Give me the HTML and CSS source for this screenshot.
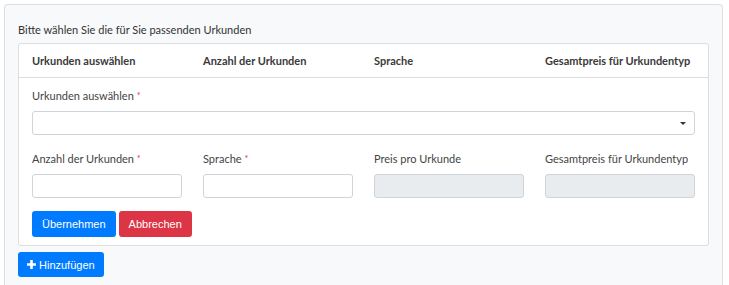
FILE: index.html
```html
<!DOCTYPE html>
<html lang="de">
<head>
    <meta charset="UTF-8">
    <meta name="viewport" content="width=device-width, initial-scale=1.0">
    <title>Urkunden</title>
    <link rel="stylesheet" href="styles.css">
</head>
<body>
    <div class="panel">
        <p class="intro">Bitte wählen Sie die für Sie passenden Urkunden</p>

        <div class="card">
            <div class="card-header">
                <span>Urkunden auswählen</span>
                <span>Anzahl der Urkunden</span>
                <span>Sprache</span>
                <span>Gesamtpreis für Urkundentyp</span>
            </div>
            <div class="card-body">
                <label class="field-label" for="certType">Urkunden auswählen <span class="req">*</span></label>
                <div class="select-box" id="certType">
                    <span class="caret"></span>
                </div>

                <div class="field-row">
                    <div class="field">
                        <label class="field-label" for="count">Anzahl der Urkunden <span class="req">*</span></label>
                        <input type="text" id="count" class="input">
                    </div>
                    <div class="field">
                        <label class="field-label" for="lang">Sprache <span class="req">*</span></label>
                        <input type="text" id="lang" class="input">
                    </div>
                    <div class="field">
                        <label class="field-label" for="unitPrice">Preis pro Urkunde</label>
                        <input type="text" id="unitPrice" class="input" disabled>
                    </div>
                    <div class="field">
                        <label class="field-label" for="totalPrice">Gesamtpreis für Urkundentyp</label>
                        <input type="text" id="totalPrice" class="input" disabled>
                    </div>
                </div>

                <div class="actions">
                    <button class="btn btn-primary">Übernehmen</button>
                    <button class="btn btn-danger">Abbrechen</button>
                </div>
            </div>
        </div>

        <button class="btn btn-primary btn-add">
            <svg width="9" height="9" viewBox="0 0 9 9"><path d="M3.2 0h2.6v3.2H9v2.6H5.8V9H3.2V5.8H0V3.2h3.2z" fill="#fff"/></svg>
            Hinzufügen
        </button>
    </div>
</body>
</html>
```

FILE: styles.css
```css
body {
    margin: 0;
    font-family: Lato, "Open Sans", sans-serif;
    font-size: 11px;
    color: #333;
    background: #fff;
}
.panel {
    margin: 4px 6px 0 4px;
    height: 290px;
    box-sizing: border-box;
    padding: 17px 13px 0;
    background-color: #f8f9fa;
    border: 1px solid #dcdde0;
    border-bottom: none;
    border-radius: 4px 4px 0 0;
}
.intro {
    margin: 0 0 5px;
    line-height: 16px;
    font-size: 11px;
    color: #333;
}
.card {
    background: white;
    border: 1px solid #dcdde0;
    border-radius: 3px;
}
.card-header {
    display: grid;
    grid-template-columns: repeat(4, 1fr);
    gap: 21px;
    height: 33px;
    align-items: center;
    padding: 0 13px;
    border-bottom: 1px solid #dcdde0;
    font-weight: 700;
    color: #3a3a3a;
}
.card-body {
    padding: 10px 13px 8px;
}
.field-label {
    display: block;
    line-height: 16px;
    margin-bottom: 7px;
    color: #444;
}
.req {
    color: #dc3545;
    font-size: 9px;
    vertical-align: top;
}
.select-box {
    position: relative;
    height: 22px;
    border: 1px solid #ced4da;
    border-radius: 3px;
    background: white;
}
.caret {
    position: absolute;
    right: 8px;
    top: 10px;
    border-left: 3px solid transparent;
    border-right: 3px solid transparent;
    border-top: 3px solid #333;
}
.field-row {
    display: grid;
    grid-template-columns: repeat(4, 1fr);
    gap: 21px;
    margin-top: 16px;
}
.input {
    display: block;
    width: 100%;
    height: 24px;
    box-sizing: border-box;
    border: 1px solid #ced4da;
    border-radius: 3px;
    background: white;
    margin: 0;
}
.input:disabled {
    background-color: #e9ecef;
}
.actions {
    display: flex;
    gap: 3px;
    margin-top: 13px;
}
.btn {
    font-family: "Liberation Sans", Arial, sans-serif;
    font-size: 11px;
    color: white;
    border: none;
    border-radius: 3px;
    height: 26px;
    padding: 0 10px;
    cursor: pointer;
}
.btn-primary {
    background-color: #007bff;
}
.btn-danger {
    background-color: #dc3545;
}
.btn-add {
    margin-top: 6px;
    height: 25px;
    padding: 0 9px;
    display: flex;
    align-items: center;
    gap: 3px;
}
```
